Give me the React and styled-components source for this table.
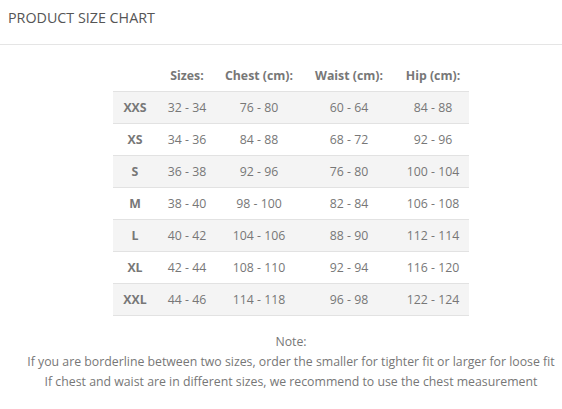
import React from "react";
import styled, { createGlobalStyle } from "styled-components";

const rows = [
  ["XXS", "32 - 34", "76 - 80", "60 - 64", "84 - 88"],
  ["XS", "34 - 36", "84 - 88", "68 - 72", "92 - 96"],
  ["S", "36 - 38", "92 - 96", "76 - 80", "100 - 104"],
  ["M", "38 - 40", "98 - 100", "82 - 84", "106 - 108"],
  ["L", "40 - 42", "104 - 106", "88 - 90", "112 - 114"],
  ["XL", "42 - 44", "108 - 110", "92 - 94", "116 - 120"],
  ["XXL", "44 - 46", "114 - 118", "96 - 98", "122 - 124"],
];

const headers = ["", "Sizes:", "Chest (cm):", "Waist (cm):", "Hip (cm):"];

const App = () => {
  return (
    <Page>
      <GlobalStyle />
      <Header>
        <Title>PRODUCT SIZE CHART</Title>
      </Header>
      <Body>
        <Table>
          <HeadRow>
            {headers.map((h, i) => (
              <HeadCell key={i}>{h}</HeadCell>
            ))}
          </HeadRow>
          {rows.map((r, i) => (
            <Row key={r[0]} striped={i % 2 === 0}>
              <LabelCell>{r[0]}</LabelCell>
              {r.slice(1).map((v, j) => (
                <Cell key={j}>{v}</Cell>
              ))}
            </Row>
          ))}
        </Table>
        <Note>
          <p>Note:</p>
          <p>
            If you are borderline between two sizes, order the smaller for
            tighter fit or larger for loose fit
          </p>
          <p>
            If chest and waist are in different sizes, we recommend to use the
            chest measurement
          </p>
        </Note>
      </Body>
    </Page>
  );
};

export default App;

const GlobalStyle = createGlobalStyle`
  body {
    margin: 0;
    background: #fff;
    font-family: "Open Sans", "Noto Sans", sans-serif;
    color: #777;
  }
`;
const Page = styled.div`
  width: 562px;
  height: 409px;
  overflow: hidden;
`;
const Header = styled.div`
  height: 45px;
  border-bottom: 1px solid #e5e5e5;
  padding-left: 8px;
  box-sizing: border-box;
`;
const Title = styled.h2`
  margin: 0;
  padding-top: 8px;
  font-size: 14.3px;
  font-weight: 400;
  line-height: 20px;
  color: #555;
`;
const Body = styled.div`
  display: flex;
  flex-direction: column;
  align-items: center;
  padding-left: 20px;
`;
const Table = styled.div`
  margin-top: 15px;
  width: 356px;
  display: flex;
  flex-direction: column;
`;
const grid = `
  display: grid;
  grid-template-columns: 44px 60px 84px 96px 72px;
  align-items: center;
  justify-items: center;
`;
const HeadRow = styled.div`
  ${grid}
  height: 32px;
  border-bottom: 1px solid #e2e2e2;
  box-sizing: border-box;
`;
const HeadCell = styled.div`
  font-size: 12.3px;
  font-weight: 700;
  color: #777;
`;
const Row = styled.div`
  ${grid}
  height: 32px;
  box-sizing: border-box;
  border-bottom: 1px solid #e2e2e2;
  background: ${({ striped }) => (striped ? "#f4f4f4" : "#fff")};
`;
const Cell = styled.div`
  font-size: 12.3px;
  color: #777;
`;
const LabelCell = styled(Cell)`
  font-weight: 700;
`;
const Note = styled.div`
  margin-top: 16px;
  text-align: center;
  font-size: 12.3px;
  line-height: 20px;
  color: #777;
  p {
    margin: 0;
    white-space: nowrap;
  }
`;
